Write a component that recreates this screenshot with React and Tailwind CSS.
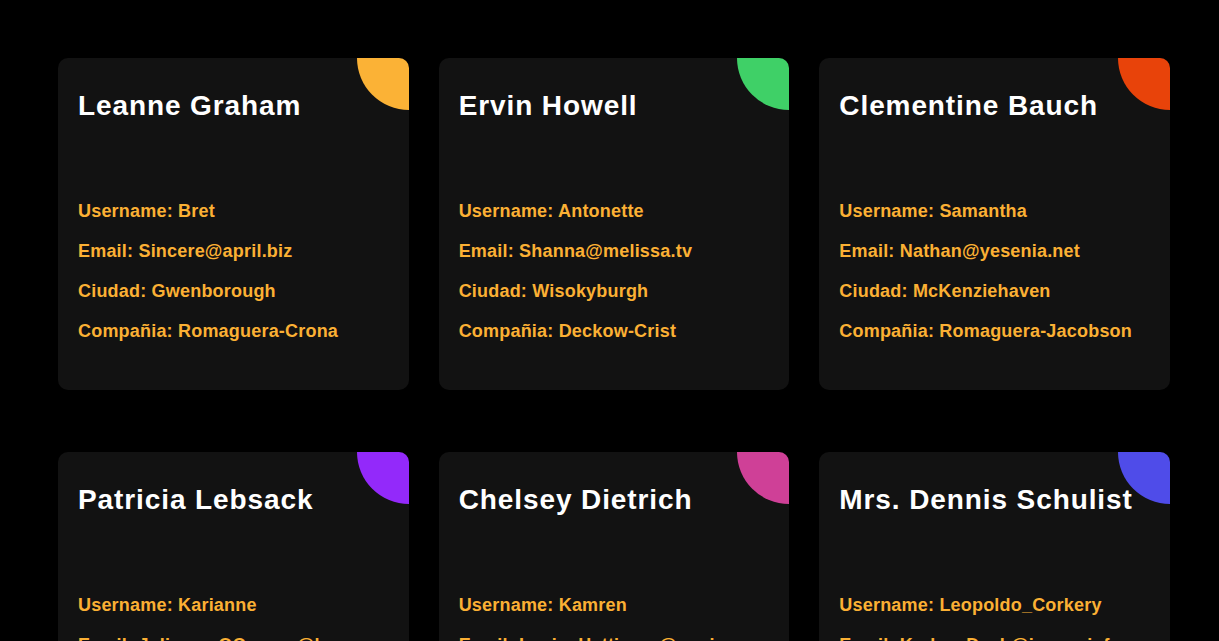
import React from 'react';

const users = [
    { name: 'Leanne Graham', username: 'Bret', email: 'Sincere@april.biz', city: 'Gwenborough', company: 'Romaguera-Crona' },
    { name: 'Ervin Howell', username: 'Antonette', email: 'Shanna@melissa.tv', city: 'Wisokyburgh', company: 'Deckow-Crist' },
    { name: 'Clementine Bauch', username: 'Samantha', email: 'Nathan@yesenia.net', city: 'McKenziehaven', company: 'Romaguera-Jacobson' },
    { name: 'Patricia Lebsack', username: 'Karianne', email: 'Julianne.OConner@kory.org', city: 'South Elvis', company: 'Robel-Corkery' },
    { name: 'Chelsey Dietrich', username: 'Kamren', email: 'Lucio_Hettinger@annie.ca', city: 'Roscoeview', company: 'Keebler LLC' },
    { name: 'Mrs. Dennis Schulist', username: 'Leopoldo_Corkery', email: 'Karley_Dach@jasper.info', city: 'South Christy', company: 'Considine-Lockman' },
];

// one accent per card, in order
const accents = ['bg-[#fbb236]', 'bg-[#3fd067]', 'bg-[#e8430a]', 'bg-[#9329fa]', 'bg-[#cf4097]', 'bg-[#4f4ce9]'];

const UserCard = ({ user, accent }) => (
    <div className="relative overflow-hidden rounded-[10px] bg-[#121212] pt-[31px] px-5 pb-[47px] font-['Liberation_Sans',Arial,sans-serif]">
        <div className={`absolute -top-[52px] -right-[52px] w-[104px] h-[104px] rounded-full ${accent}`} />
        <h2 className="text-[28px] leading-[34px] text-white font-bold tracking-[0.9px] whitespace-nowrap">
            {user.name}
        </h2>
        <div className="mt-[76px] flex flex-col gap-4 text-[18px] leading-6 font-bold tracking-[0.2px] text-[#fbb034]">
            <p>Username: {user.username}</p>
            <p>Email: {user.email}</p>
            <p>Ciudad: {user.city}</p>
            <p>Compañia: {user.company}</p>
        </div>
    </div>
);

export default function App() {
    return (
        <div className="min-h-screen bg-black pt-[58px] pl-[58px] pr-[49px] pb-16">
            <div className="grid grid-cols-3 gap-x-[30px] gap-y-[62px]">
                {users.map((u, i) => (
                    <UserCard key={u.username} user={u} accent={accents[i % accents.length]} />
                ))}
            </div>
        </div>
    );
}
